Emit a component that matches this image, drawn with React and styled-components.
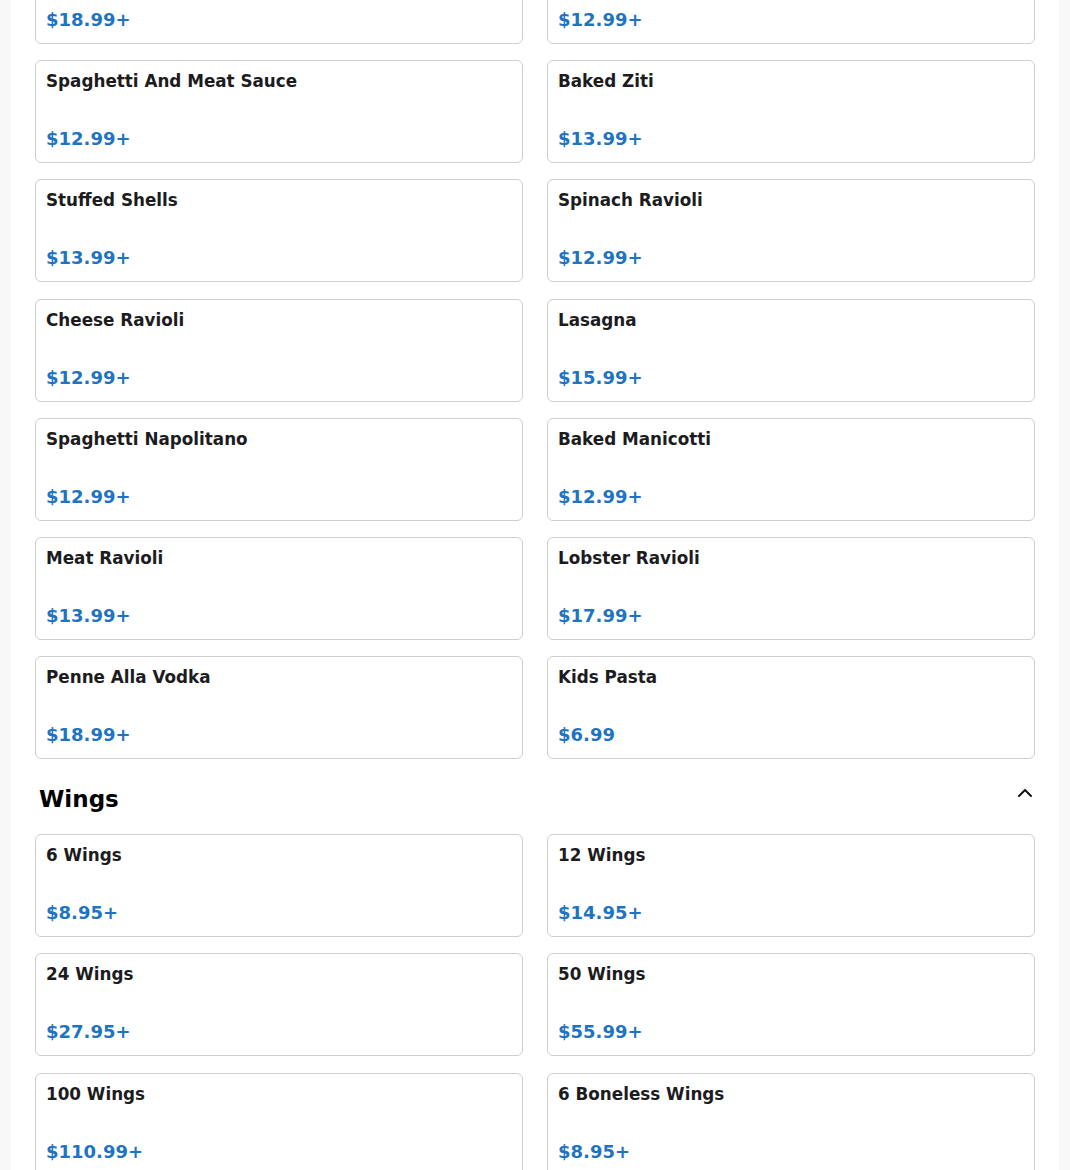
import React from 'react';
import styled, { createGlobalStyle } from 'styled-components';

const GlobalStyle = createGlobalStyle`
  body {
    margin: 0;
    background: #f8f8f8;
    font-family: "DejaVu Sans", "Liberation Sans", sans-serif;
  }
`;

const Page = styled.main`
  width: 1048px;
  margin: 0 auto;
  background: #ffffff;
  padding: 0 24px;
  box-sizing: border-box;
  min-height: 1200px;
`;

const Section = styled.section`
  &:first-child {
    margin-top: -59px;
  }
`;

const Header = styled.div`
  display: flex;
  justify-content: space-between;
  align-items: flex-start;
  margin: 22px -2px 21px 0;
  padding-left: 4px;
  cursor: pointer;

  svg {
    flex-shrink: 0;
  }
`;

const Heading = styled.h2`
  margin: 0;
  padding-top: 5px;
  font-size: 23px;
  line-height: 27px;
  font-weight: 700;
  color: #000;
`;

const Grid = styled.div`
  display: grid;
  grid-template-columns: 1fr 1fr;
  column-gap: 24px;
  row-gap: 16.2px;
`;

const Card = styled.div`
  display: flex;
  flex-direction: column;
  padding: 10px;
  border: 1px solid #cfcfcf;
  border-radius: 6px;
  background: #fff;
`;

const Title = styled.div`
  font-size: 16.8px;
  line-height: 21px;
  font-weight: 700;
  color: #1c1c1e;
`;

const Price = styled.div`
  margin-top: 33px;
  font-size: 18px;
  line-height: 27px;
  font-weight: 700;
  color: #1f74c2;
`;

const Chevron = () => (
  <svg width="24" height="24" viewBox="0 0 24 24" fill="none" stroke="#111" strokeWidth="2" strokeLinecap="round" strokeLinejoin="round">
    <path d="m18 15-6-6-6 6" />
  </svg>
);

const pasta = [
  ['Fettuccine Alfredo', '$18.99+'],
  ['Spaghetti And Meatballs', '$12.99+'],
  ['Spaghetti And Meat Sauce', '$12.99+'],
  ['Baked Ziti', '$13.99+'],
  ['Stuffed Shells', '$13.99+'],
  ['Spinach Ravioli', '$12.99+'],
  ['Cheese Ravioli', '$12.99+'],
  ['Lasagna', '$15.99+'],
  ['Spaghetti Napolitano', '$12.99+'],
  ['Baked Manicotti', '$12.99+'],
  ['Meat Ravioli', '$13.99+'],
  ['Lobster Ravioli', '$17.99+'],
  ['Penne Alla Vodka', '$18.99+'],
  ['Kids Pasta', '$6.99'],
];

const wings = [
  ['6 Wings', '$8.95+'],
  ['12 Wings', '$14.95+'],
  ['24 Wings', '$27.95+'],
  ['50 Wings', '$55.99+'],
  ['100 Wings', '$110.99+'],
  ['6 Boneless Wings', '$8.95+'],
];

const ItemGrid = ({ items }) => (
  <Grid>
    {items.map(([name, price]) => (
      <Card key={name}>
        <Title>{name}</Title>
        <Price>{price}</Price>
      </Card>
    ))}
  </Grid>
);

const App = () => {
  return (
    <>
      <GlobalStyle />
      <Page>
        <Section>
          <ItemGrid items={pasta} />
        </Section>
        <Section>
          <Header>
            <Heading>Wings</Heading>
            <Chevron />
          </Header>
          <ItemGrid items={wings} />
        </Section>
      </Page>
    </>
  );
};

export default App;
